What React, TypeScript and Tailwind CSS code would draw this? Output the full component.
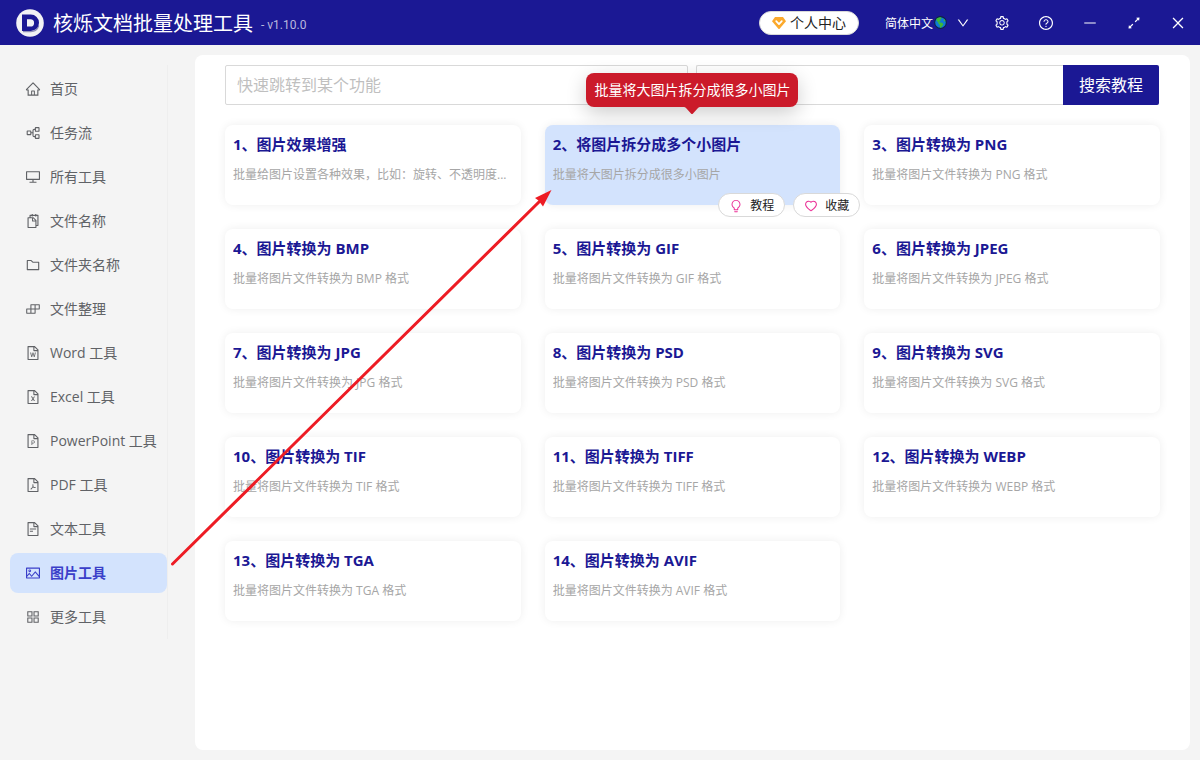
import { useState } from "react";
import type { IconType } from "react-icons";
import {
  AiOutlineAppstore,
  AiOutlineArrowsAlt,
  AiOutlineBuild,
  AiOutlineBulb,
  AiOutlineClose,
  AiOutlineDesktop,
  AiOutlineDown,
  AiOutlineFileExcel,
  AiOutlineFilePdf,
  AiOutlineFilePpt,
  AiOutlineFileText,
  AiOutlineFileWord,
  AiOutlineFolder,
  AiOutlineHeart,
  AiOutlineHome,
  AiOutlineMinus,
  AiOutlinePicture,
  AiOutlineQuestionCircle,
  AiOutlineSetting,
  AiOutlineSnippets,
} from "react-icons/ai";

interface MenuItem {
  label: string;
  icon: IconType | typeof FlowIcon;
}

interface Tool {
  title: string;
  desc: string;
}

const menuItems: MenuItem[] = [
  { label: "首页", icon: AiOutlineHome },
  { label: "任务流", icon: FlowIcon },
  { label: "所有工具", icon: AiOutlineDesktop },
  { label: "文件名称", icon: AiOutlineSnippets },
  { label: "文件夹名称", icon: AiOutlineFolder },
  { label: "文件整理", icon: AiOutlineBuild },
  { label: "Word 工具", icon: AiOutlineFileWord },
  { label: "Excel 工具", icon: AiOutlineFileExcel },
  { label: "PowerPoint 工具", icon: AiOutlineFilePpt },
  { label: "PDF 工具", icon: AiOutlineFilePdf },
  { label: "文本工具", icon: AiOutlineFileText },
  { label: "图片工具", icon: AiOutlinePicture },
  { label: "更多工具", icon: AiOutlineAppstore },
];

const formats = ["PNG", "BMP", "GIF", "JPEG", "JPG", "PSD", "SVG", "TIF", "TIFF", "WEBP", "TGA", "AVIF"];

const tools: Tool[] = [
  { title: "图片效果增强", desc: "批量给图片设置各种效果，比如：旋转、不透明度..." },
  { title: "将图片拆分成多个小图片", desc: "批量将大图片拆分成很多小图片" },
  ...formats.map((f) => ({
    title: `图片转换为 ${f}`,
    desc: `批量将图片文件转换为 ${f} 格式`,
  })),
];

const windowActions = [
  { label: "设置", icon: AiOutlineSetting },
  { label: "帮助", icon: AiOutlineQuestionCircle },
  { label: "最小化", icon: AiOutlineMinus },
  { label: "最大化", icon: AiOutlineArrowsAlt },
  { label: "关闭", icon: AiOutlineClose },
];

const cardActions = [
  { label: "教程", icon: AiOutlineBulb },
  { label: "收藏", icon: AiOutlineHeart },
];

function FlowIcon({ className }: { className?: string }): React.JSX.Element {
  return (
    <svg viewBox="0 0 16 16" className={className} fill="none" stroke="currentColor" strokeWidth="1.1">
      <rect x="2.2" y="6" width="3.6" height="3.6" rx="0.3" />
      <rect x="10.4" y="2.6" width="3.6" height="3.6" rx="0.3" />
      <rect x="10.4" y="9.8" width="3.6" height="3.6" rx="0.3" />
      <path d="M10.4 4.4H9.200q-1.200 0-1.200 1.200v4.800q0 1.200 1.200 1.200h1.200M6 7.800h2" />
    </svg>
  );
}

function Logo(): React.JSX.Element {
  return (
    <svg viewBox="0 0 28 28" className="size-7 shrink-0" aria-hidden="true">
      <circle cx="14" cy="14" r="13.8" fill="#f1f1f5" />
      <path d="M7 22.600h7.700a8.400 8.400 0 0 0 8-6" fill="none" stroke="#8f8eb8" strokeWidth="1.4" />
      <path
        d="M6 5.600h8.800a8.200 8.200 0 0 1 0 16.400H6zM11 10.200v7.400h3.400a3.700 3.700 0 0 0 0-7.400z"
        fill="#1b1894"
        fillRule="evenodd"
      />
    </svg>
  );
}

function GemIcon(): React.JSX.Element {
  return (
    <svg viewBox="0 0 14 12" className="h-3 w-3.5 shrink-0" aria-hidden="true">
      <path d="M3 0h8l3 4.2L7.6 11.7q-.6.6-1.2 0L0 4.2z" fill="#fba92c" />
      <path d="M4.2 4.2 7 7.2l2.8-3" fill="none" stroke="#fff" strokeWidth="1.7" strokeLinecap="round" strokeLinejoin="round" />
    </svg>
  );
}

function GlobeIcon(): React.JSX.Element {
  return (
    <svg viewBox="0 0 12 12" className="size-[13px] shrink-0" aria-hidden="true">
      <circle cx="6" cy="6" r="5.4" fill="#0f79d8" stroke="#10243f" strokeWidth="1" />
      <path d="M2.2 2.6Q3.8 1 6 1.1l1.3 1.2-1.6 1 .4 1.3-1.4.4.9 1 1.9.2 1.2 1.3-1 1.7-1.3 1.6-.9-.3-.1-2.2-1.2-1.2-.4-1.5-1.3-1z" fill="#3fba35" />
      <path d="m9.2 2.6 1.3 1.7-.6.9-1-.8z" fill="#3fba35" />
    </svg>
  );
}

function TopBar(): React.JSX.Element {
  return (
    <header className="flex h-[45px] shrink-0 items-center bg-[#1b1894] pl-4 text-white">
      <Logo />
      <h1 className="mt-0.5 ml-[9px] text-xl leading-7">核烁文档批量处理工具</h1>
      <span className="mt-1 ml-2 font-[Roboto] text-xs text-[#b9b8de]">- v1.10.0</span>

      <button className="ml-auto flex h-6 items-center gap-1 rounded-full border border-[#d9d9d9] bg-white px-3 text-sm leading-5 text-[#222]">
        <GemIcon />
        个人中心
      </button>

      <div className="ml-[26px] flex items-center">
        <select aria-label="语言" className="mt-0.5 appearance-none bg-transparent text-xs">
          <option>简体中文</option>
        </select>
        <GlobeIcon />
        <AiOutlineDown className="ml-[9px] size-3.5" />
      </div>

      <div className="ml-2.5 flex">
        {windowActions.map(({ label, icon: Icon }) => (
          <button key={label} aria-label={label} className="flex h-8 w-11 items-center justify-center">
            <Icon className="size-4" />
          </button>
        ))}
      </div>
    </header>
  );
}

function Sidebar(): React.JSX.Element {
  const [active, setActive] = useState("图片工具");

  return (
    <nav className="mt-5 ml-2.5 w-[158px] shrink-0 self-start border-r border-[#eeeeee] pt-1 pb-0.5">
      <ul className="flex flex-col gap-1">
        {menuItems.map(({ label, icon: Icon }) => (
          <li key={label}>
            <button
              onClick={() => setActive(label)}
              className={`flex h-10 w-full items-center gap-[9px] rounded-lg pl-[15px] text-sm leading-5 ${
                active === label ? "bg-[#d3e3fd] font-semibold text-[#3a3fc9]" : "text-[#606266]"
              }`}
            >
              <Icon className="size-4 shrink-0" />
              {label}
            </button>
          </li>
        ))}
      </ul>
    </nav>
  );
}

function ToolCard({ tool, index, active }: { tool: Tool; index: number; active: boolean }): React.JSX.Element {
  return (
    <li
      className={`relative h-20 rounded-lg px-2 pt-[7px] shadow-[0_0_10px_rgba(0,0,0,0.07)] ${
        active ? "bg-[#d3e3fd]" : "bg-white"
      }`}
    >
      <h2 className="truncate text-[15px] leading-6 font-bold text-[#1b1894]">
        {index}、{tool.title}
      </h2>
      <p className="mt-[9px] truncate text-xs leading-5 text-[#a6a6a6]">{tool.desc}</p>

      {/* Hover state: tooltip above, actions on the bottom edge */}
      {active && (
        <>
          <div
            role="tooltip"
            className="absolute bottom-full left-1/2 mb-[18px] -translate-x-1/2 rounded-lg bg-[#cb1a2a] px-2 py-[7px] text-sm leading-5 whitespace-nowrap text-white shadow-[0_6px_20px_rgba(0,0,0,0.2)]"
          >
            {tool.desc}
            <svg viewBox="0 0 16 8" className="absolute top-full left-1/2 h-2 w-4 -translate-x-1/2">
              <path d="M0 0h16q-1 0-2 1L9 6.600q-1 1-2 0L2 1Q1 0 0 0z" fill="#cb1a2a" />
            </svg>
          </div>
          <div className="absolute top-[68px] -right-5 z-10 flex gap-2">
            {cardActions.map(({ label, icon: Icon }) => (
              <button
                key={label}
                className="flex h-6 items-center gap-[7px] rounded-full border border-[#d9d9d9] bg-white px-2.5 pt-0.5 text-xs text-[#222]"
              >
                <Icon className="size-3.5 text-[#eb2f96]" />
                {label}
              </button>
            ))}
          </div>
        </>
      )}
    </li>
  );
}

export default function App(): React.JSX.Element {
  return (
    <div className="relative flex min-h-screen flex-col bg-[#f4f4f4] font-['Open_Sans','Noto_Sans_CJK_SC',sans-serif]">
      <TopBar />
      <div className="flex flex-1">
        <Sidebar />
        <main className="mt-2.5 mr-2.5 mb-2.5 ml-[27px] min-w-0 flex-1 rounded-lg bg-white px-[30px] pt-2.5">
          {/* Search */}
          <div className="grid h-10 grid-cols-2 gap-2 pr-px">
            <input
              type="text"
              aria-label="快速跳转到某个功能"
              placeholder="快速跳转到某个功能"
              className="min-w-0 rounded-xs border border-[#d9d9d9] bg-white px-[11px] text-base outline-none placeholder:text-[#bfbfbf]"
            />
            <form className="flex min-w-0" onSubmit={(e) => e.preventDefault()}>
              <input
                type="search"
                aria-label="搜索教程"
                className="min-w-0 flex-1 rounded-l-xs border border-r-0 border-[#d9d9d9] bg-white px-[11px] text-base outline-none"
              />
              <button type="submit" className="rounded-r-xs bg-[#1b1894] px-4 text-base text-white">
                搜索教程
              </button>
            </form>
          </div>

          {/* Tools */}
          <ul className="mt-5 grid grid-cols-3 gap-6">
            {tools.map((tool, i) => (
              <ToolCard key={tool.title} tool={tool} index={i + 1} active={i === 1} />
            ))}
          </ul>
        </main>
      </div>

      {/* Pointer from the menu entry to the card */}
      <svg className="pointer-events-none absolute inset-0 z-20 size-full" aria-hidden="true">
        <path d="M172.500 564 542 199" fill="none" stroke="#ed1c24" strokeWidth="3" strokeLinecap="round" />
        <path d="m551.500 190-16.500 8 3.500 2.500 1.500 2 3 4z" fill="#ed1c24" />
      </svg>
    </div>
  );
}
